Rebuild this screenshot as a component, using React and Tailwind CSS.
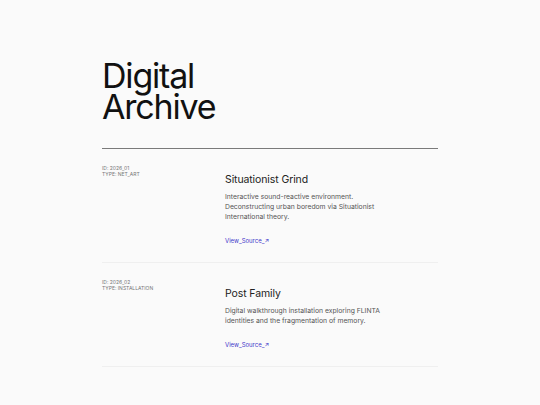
export default function App() {
  const items = [
    {
      id: "2026_01",
      type: "NET_ART",
      title: "Situationist Grind",
      desc: "Interactive sound-reactive environment. Deconstructing urban boredom via Situationist International theory.",
    },
    {
      id: "2026_02",
      type: "INSTALLATION",
      title: "Post Family",
      desc: "Digital walkthrough installation exploring FLINTA identities and the fragmentation of memory.",
    },
  ];

  return (
    <div
      className="min-h-[405px] w-full bg-[#fafafa] text-[#111]"
      style={{ fontFamily: "Inter, 'Noto Sans', sans-serif" }}
    >
      <div className="mx-auto w-[336px] pt-[60px]">
        {/* Header */}
        <h1 className="text-[34px] leading-[31px] tracking-[-0.035em] font-normal text-[#111]">
          Digital
          <br />
          Archive
        </h1>
        <div className="mt-[26px] h-px bg-[#7a7a7a]" />

        {/* Entries */}
        {items.map((item) => (
          <div key={item.id} className="flex border-b border-[#efefef] pt-[16px] pb-[16px]">
            <div className="w-[123px] shrink-0 text-[5px] leading-[6px] text-[#777] uppercase">
              <p>ID: {item.id}</p>
              <p>TYPE: {item.type}</p>
            </div>
            <div className="mt-[8px] w-[160px]">
              <h2 className="text-[10.5px] leading-[14px] tracking-[-0.01em] text-[#222]">{item.title}</h2>
              <p className="mt-[5px] text-[6.8px] leading-[10px] text-[#555]">{item.desc}</p>
              <a className="mt-[14px] block text-[6px] leading-[10px] text-[#4338ca]">
                View_Source_↗
              </a>
            </div>
          </div>
        ))}
      </div>
    </div>
  );
}
